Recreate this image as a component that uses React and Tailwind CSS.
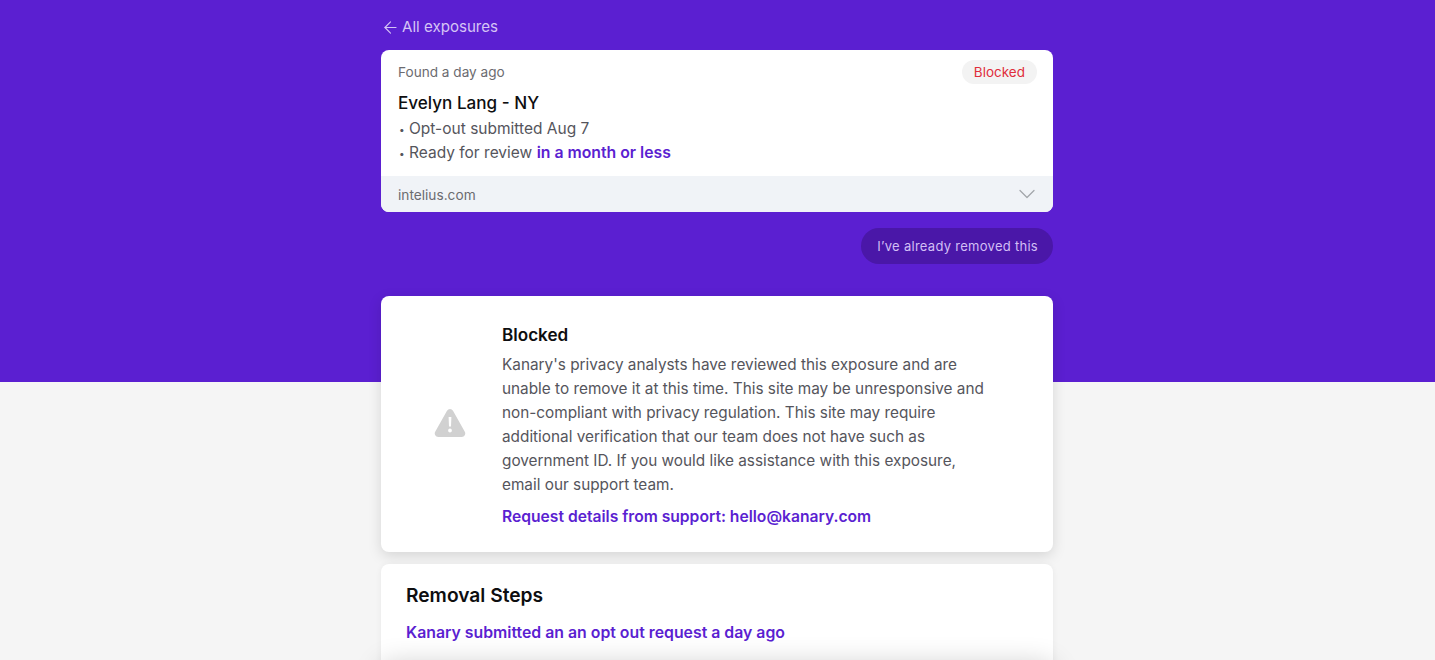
import { ArrowLeft, ChevronDown } from 'lucide-react';

const FONT = "font-['Inter','Liberation_Sans',sans-serif]";

function WarningIcon() {
  return (
    <svg width="32" height="30" viewBox="0 0 32 30" className="text-[#d1d1d1]">
      <path
        fill="currentColor"
        fillRule="evenodd"
        d="M13 2.800a3.500 3.500 0 0 1 6 0l11.800 21a3.500 3.500 0 0 1-3 5.200H4.200a3.500 3.500 0 0 1-3-5.200zM14.600 9h2.800l-.4 9.500h-2zM16 20.600a1.900 1.900 0 1 1 0 3.800 1.900 1.900 0 0 1 0-3.800z"
      />
    </svg>
  );
}

function Bullet({ children }) {
  return (
    <div className="flex text-[15.5px] leading-6 text-[#55555c]">
      <span className="w-[11px] text-[10px] pl-px">•</span>
      <span>{children}</span>
    </div>
  );
}

function ExposureCard() {
  return (
    <div className="rounded-lg overflow-hidden bg-white">
      <div className="pl-[17px] pr-4 pt-[10px] h-[126px]">
        <div className="flex items-center justify-between h-6">
          <span className="text-[13.6px] text-[#6b6b70]">Found a day ago</span>
          <span className="rounded-full bg-[#f3f3f3] px-3 h-6 flex items-center text-[13.5px] text-[#e02d3c]">Blocked</span>
        </div>
        <div className="mt-[7px] text-[17.1px] leading-6 font-medium text-[#0e0e10]">Evelyn Lang - NY</div>
        <div className="mt-[2px]">
          <Bullet>Opt-out submitted Aug 7</Bullet>
        </div>
        <Bullet>
          Ready for review <span className="font-semibold text-[15.8px] text-[#5b1fd1]">in a month or less</span>
        </Bullet>
      </div>
      <div className="flex items-center justify-between h-9 bg-[#f0f3f7] pl-[17px] pr-3">
        <span className="pt-[2px] text-[13.7px] text-[#6b6b70]">intelius.com</span>
        <ChevronDown size={28} strokeWidth={1.1} className="text-[#a3a6ab]" />
      </div>
    </div>
  );
}

export default function App() {
  return (
    <div className={`h-[660px] overflow-hidden bg-[linear-gradient(#5b1fd1_382px,#f5f5f5_382px)] ${FONT}`}>
      <div className="w-[672px] ml-[381px]">
        <div className="flex items-center gap-[2px] pt-[7px] h-[50px] pb-[3px] text-[15.1px] text-[#d5c4f5]">
          <ArrowLeft size={19} strokeWidth={1.4} />
          <span>All exposures</span>
        </div>

        <ExposureCard />

        <div className="flex justify-end mt-4">
          <button className="h-9 rounded-full bg-[#4a17a8] pl-4 pr-[15px] pt-px text-[13px] tracking-[0.28px] text-[#d2bff5]">I’ve already removed this</button>
        </div>

        <div className="mt-8 h-[256px] flex rounded-lg bg-white shadow-[0_4px_14px_rgba(0,0,0,0.13)]">
          <div className="w-[121px] flex items-center justify-center pl-[16px] pb-[3px]">
            <WarningIcon />
          </div>
          <div className="w-[490px] pt-[27px]">
            <div className="text-[17.1px] leading-6 font-semibold text-[#0e0e10]">Blocked</div>
            <p className="text-[15.33px] leading-6 text-[#55555c] mt-[6px]">
              Kanary's privacy analysts have reviewed this exposure and are unable to remove it at this time. This site may be unresponsive and non-compliant with privacy regulation. This site may require additional verification that our team does not have such as government ID. If you would like assistance with this exposure, email our support team.
            </p>
            <div className="mt-2 text-[15.65px] leading-6 font-semibold text-[#5b1fd1]">Request details from support: hello@kanary.com</div>
          </div>
        </div>

        <div className="mt-3 h-[120px] rounded-lg bg-white pl-[25px] pt-[17px] shadow-[0_1px_6px_rgba(0,0,0,0.06)]">
          <div className="text-[19.2px] leading-7 font-semibold text-[#0e0e10]">Removal Steps</div>
          <div className="mt-[12px] text-[15.84px] leading-6 font-semibold text-[#5b1fd1]">Kanary submitted an an opt out request a day ago</div>
        </div>

        <div className="-mt-[20px] relative h-[40px] rounded-lg shadow-[0_0_28px_rgba(0,0,0,0.2)]" />
      </div>
    </div>
  );
}
